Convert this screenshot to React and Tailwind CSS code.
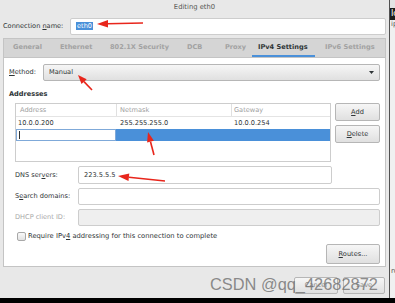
import React from "react";

// tab label + its width (text start to next text start, as in the shot)
const tabs = [
  { label: "General", w: "w-[47px]" },
  { label: "Ethernet", w: "w-[50px]" },
  { label: "802.1X Security", w: "w-[77px]" },
  { label: "DCB", w: "w-[38px]" },
  { label: "Proxy", w: "w-[33px]" },
  { label: "IPv4 Settings", w: "w-[63px] mr-[4px]" },
  { label: "IPv6 Settings", w: "w-[60px]" },
];

// little helper for the GTK style push buttons
const Btn = ({ className, children }) => (
  <div
    className={`flex items-center justify-center rounded-[2px] border border-[#b6b6b6] bg-gradient-to-b from-[#f6f6f6] to-[#e0e0e0] text-[#2e3436] ${className}`}
  >
    {children}
  </div>
);

const Entry = ({ className, children }) => (
  <div className={`flex items-center rounded-[2px] border border-[#cdcdcd] px-[5px] text-[#2e3436] ${className}`}>
    {children}
  </div>
);

const App = () => {
  return (
    <div className="w-[395px] h-[303px] flex flex-col bg-black overflow-hidden font-['DejaVu_Sans',sans-serif] text-[6.6px] leading-none">
      <div className="flex h-[298px]">
        {/* dialog */}
        <div className="relative w-[389px] bg-[#e8e8e8] flex flex-col">
          <div className="h-[15px] flex items-center justify-center text-[#555753] text-[6.8px]">Editing eth0</div>

          <div className="h-[22px] flex items-center pl-[3px] pr-[3px]">
            <span className="w-[67px] text-[#2e3436]">
              Connection <span className="underline">n</span>ame:
            </span>
            <Entry className="flex-1 h-[17px] bg-white">
              <span className="bg-[#4a90d9] text-white px-px py-[1px]">eth0</span>
            </Entry>
          </div>

          {/* notebook */}
          <div className="mt-px mx-[3px] flex flex-col">
            <div className="h-[19px] bg-[#d5d5d5] flex pl-[3px] border border-b-0 border-[#c4c4c4]">
              {tabs.map((t) => (
                <div
                  key={t.label}
                  className={`${t.w} shrink-0 pl-[6px] whitespace-nowrap flex items-center font-bold border-b-2 ${
                    t.label === "IPv4 Settings" ? "text-[#2e3436] border-[#4a90d9]" : "text-[#a2a2a2] border-transparent"
                  }`}
                >
                  {t.label}
                </div>
              ))}
            </div>

            <div className="h-[210px] bg-white border border-[#c4c4c4] px-[5px] pt-[6px] flex flex-col">
              <div className="flex items-center h-[17px]">
                <span className="w-[34px] text-[#2e3436]">
                  <span className="underline">M</span>ethod:
                </span>
                <Btn className="flex-1 h-[17px] !justify-between px-[5px]">
                  <span>Manual</span>
                  <svg width="5" height="3" viewBox="0 0 5 3">
                    <polygon points="0,0 5,0 2.5,3" fill="#2e3436" />
                  </svg>
                </Btn>
              </div>

              <div className="mt-[7px] h-[13px] flex items-center font-bold text-[#2e3436]">Addresses</div>

              <div className="mt-[2px] pl-[6px] flex flex-col">
                <div className="flex gap-[4px]">
                  <div className="w-[317px] h-[59px] border border-[#cdcdcd] flex flex-col">
                    <div className="h-[13px] flex text-[#a0a0a0] border-b border-[#e4e4e4]">
                      <div className="w-[101px] pl-[4px] flex items-center border-r border-[#e0e0e0]">Address</div>
                      <div className="w-[115px] pl-[3px] flex items-center border-r border-[#e0e0e0]">Netmask</div>
                      <div className="flex-1 pl-[2px] flex items-center">Gateway</div>
                    </div>
                    <div className="h-[12px] flex text-[#2e3436]">
                      <div className="w-[101px] pl-[2px] flex items-center">10.0.0.200</div>
                      <div className="w-[115px] pl-[3px] flex items-center">255.255.255.0</div>
                      <div className="flex-1 pl-[2px] flex items-center">10.0.0.254</div>
                    </div>
                    <div className="h-[12px] flex bg-[#4a90d9]">
                      <div className="w-[100px] bg-white border border-[#7fa9d9] flex items-center pl-[2px]">
                        <div className="w-px h-[8px] bg-[#2e3436]" />
                      </div>
                    </div>
                  </div>
                  <div className="flex flex-col gap-[4px]">
                    <Btn className="w-[45px] h-[18px]">
                      <span><span className="underline">A</span>dd</span>
                    </Btn>
                    <Btn className="w-[45px] h-[18px]">
                      <span><span className="underline">D</span>elete</span>
                    </Btn>
                  </div>
                </div>

                <div className="mt-[4px] flex items-center h-[18px]">
                  <span className="w-[63px] text-[#2e3436]">
                    DNS ser<span className="underline">v</span>ers:
                  </span>
                  <Entry className="w-[254px] h-[18px] bg-white">223.5.5.5</Entry>
                </div>
                <div className="mt-[4px] flex items-center h-[17px]">
                  <span className="w-[63px] text-[#2e3436]">
                    S<span className="underline">e</span>arch domains:
                  </span>
                  <Entry className="flex-1 h-[17px] bg-white" />
                </div>
                <div className="mt-[4px] flex items-center h-[17px]">
                  <span className="w-[63px] text-[#a8a8a8]">DHCP client ID:</span>
                  <Entry className="flex-1 h-[17px] bg-[#efefef]" />
                </div>

                <div className="mt-[5px] flex items-center h-[10px] pl-[2px] gap-[2px] text-[#2e3436] text-[6.75px]">
                  <div className="w-[9px] h-[9px] rounded-[2px] border border-[#a8a8a8] bg-gradient-to-b from-[#fafafa] to-[#e2e2e2]" />
                  <span>
                    Require IPv<span className="underline">4</span> addressing for this connection to complete
                  </span>
                </div>

                <div className="mt-[3px] flex justify-end">
                  <Btn className="w-[54px] h-[20px]">
                    <span><span className="underline">R</span>outes...</span>
                  </Btn>
                </div>
              </div>
            </div>
          </div>

          {/* bottom buttons */}
          <div className="flex-1 flex items-start justify-end pt-[10px] pr-[4px] gap-[5px]">
            <Btn className="w-[44px] h-[17px] text-[#8a8a8a]">Cancel</Btn>
            <Btn className="w-[42px] h-[17px] text-[#8a8a8a]">Save</Btn>
          </div>

          {/* watermark */}
          <div className="absolute left-[210px] top-[276px] text-[16.4px] leading-none font-['Liberation_Sans',sans-serif] text-[#6f6f6f]/80 whitespace-nowrap">
            CSDN @qq_42682872
          </div>

          {/* red annotation arrows */}
          <svg className="absolute left-0 top-0 pointer-events-none" width="389" height="298">
            <g fill="#e8261c" stroke="#e8261c">
              <line x1="143" y1="23" x2="107" y2="23.8" strokeWidth="1.6" />
              <polygon points="97,24 108,27.6 108,20" stroke="none" />
              <line x1="92" y1="90" x2="84" y2="81.6" strokeWidth="1.6" />
              <polygon points="78,75 81.5,84 86.7,79.2" stroke="none" />
              <line x1="154" y1="155" x2="150.5" y2="141.7" strokeWidth="1.6" />
              <polygon points="148,132 147.1,142.6 153.9,140.8" stroke="none" />
              <line x1="165" y1="181" x2="128.9" y2="177.2" strokeWidth="1.6" />
              <polygon points="118,176 128.5,181 129.3,173.4" stroke="none" />
            </g>
          </svg>
        </div>

        <div className="w-px bg-[#505050]" />

        {/* window behind */}
        <div className="flex-1 bg-[#f0f0f0] flex flex-col overflow-hidden">
          <div className="h-[8px] bg-[#e4e4e4]" />
          <div className="h-[12px] bg-[#1c1c1c] text-white text-[8px] flex items-center pl-px whitespace-nowrap">Ic</div>
          <div className="h-[9px] text-[#555] text-[7px] flex items-center pl-px whitespace-nowrap">ip</div>
          <div className="flex-1" />
          <div className="h-[30px] text-[#555] text-[7px] pl-px whitespace-nowrap">ro</div>
        </div>
      </div>
      <div className="h-[5px] bg-black" />
    </div>
  );
};

export default App;
